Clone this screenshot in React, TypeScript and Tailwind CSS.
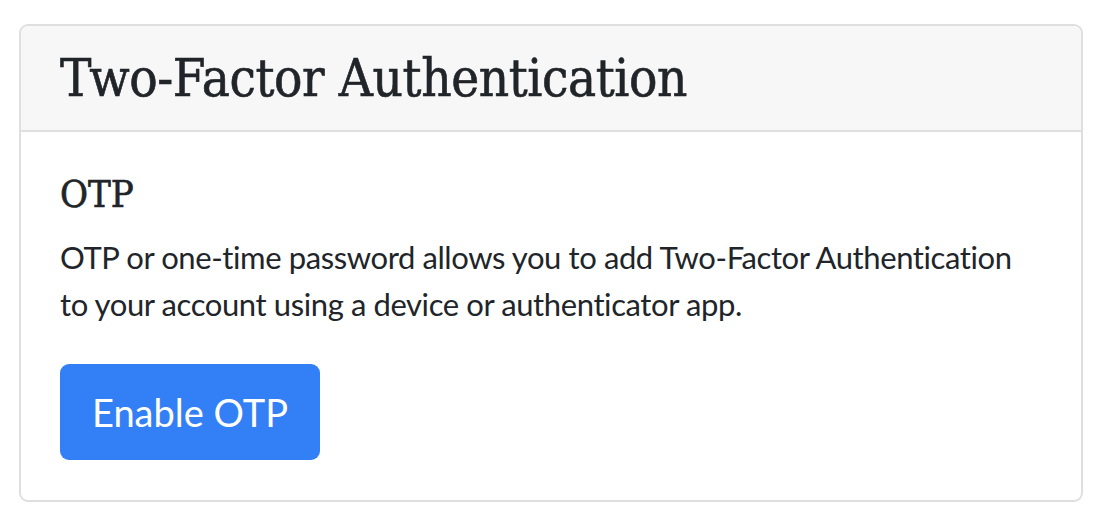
import React from "react";

export default function App() {
  return (
    <div className="w-[1096px] h-[514px] bg-white pt-[24px] pl-[19px]">
      <div className="w-[1064px] h-[478px] border-2 border-[#dfdfdf] rounded-[9px] overflow-hidden flex flex-col">
        <div className="h-[106px] bg-[#f7f7f7] border-b-2 border-[#dfdfdf] px-[39px] flex items-center">
          <h3
            className="text-[52.5px] leading-[60px] text-[#212529] tracking-[-0.4px] [-webkit-text-stroke:0.6px_#212529]"
            style={{ fontFamily: '"DejaVu Serif Condensed", "DejaVu Serif", serif', fontStretch: "condensed" }}
          >
            Two-Factor Authentication
          </h3>
        </div>
        <div className="flex-1 px-[39px] pt-[38px]">
          <h5
            className="text-[38px] leading-[48px] text-[#212529] mb-[16px] [-webkit-text-stroke:0.6px_#212529]"
            style={{ fontFamily: '"DejaVu Serif Condensed", "DejaVu Serif", serif', fontStretch: "condensed" }}
          >
            OTP
          </h5>
          <p
            className="text-[31px] leading-[47px] text-[#212529] w-[985px] tracking-[-0.4px]"
            style={{ fontFamily: 'Lato, "Noto Sans", sans-serif' }}
          >
            OTP or one-time password allows you to add Two-Factor Authentication to your account using a device or authenticator app.
          </p>
          <button
            className="mt-[36px] w-[260px] h-[96px] bg-[#3380f6] rounded-[9px] text-white text-[38px] leading-[48px]"
            style={{ fontFamily: 'Lato, "Noto Sans", sans-serif' }}
          >
            Enable OTP
          </button>
        </div>
      </div>
    </div>
  );
}
